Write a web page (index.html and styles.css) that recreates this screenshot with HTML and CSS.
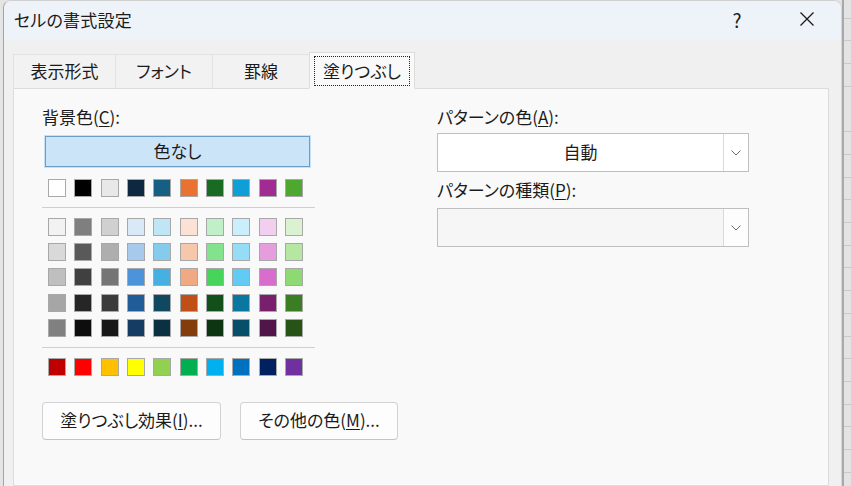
FILE: index.html
```html
<!DOCTYPE html>
<html lang="ja">
<head>
<meta charset="utf-8">
<link rel="stylesheet" href="styles.css">
</head>
<body>
<div class="screen">
  <div class="window">
    <div class="titlebar">
      <div class="title">セルの書式設定</div>
      <div class="help">?</div>
      <div class="close">
        <svg width="16" height="16" viewBox="0 0 16 16"><path d="M1.5 1.5 L14.5 14.5 M14.5 1.5 L1.5 14.5" stroke="#1a1a1a" stroke-width="1.3" fill="none"/></svg>
      </div>
    </div>
    <div class="content">
      <div class="tabs">
        <div class="tab t1">表示形式</div>
        <div class="tab t2">フォント</div>
        <div class="tab t3">罫線</div>
        <div class="tab active"><span class="focus">塗りつぶし</span></div>
      </div>
      <div class="panel">
        <div class="leftcol">
          <div class="label">背景色(<u>C</u>):</div>
          <div class="nocolor">色なし</div>
          <div class="row10 first">
            <span class="sw" style="background:#ffffff"></span>
            <span class="sw" style="background:#000000"></span>
            <span class="sw" style="background:#e8e8e8"></span>
            <span class="sw" style="background:#0e2841"></span>
            <span class="sw" style="background:#156082"></span>
            <span class="sw" style="background:#e97132"></span>
            <span class="sw" style="background:#196b24"></span>
            <span class="sw" style="background:#0f9ed5"></span>
            <span class="sw" style="background:#a02b93"></span>
            <span class="sw" style="background:#4ea72e"></span>
          </div>
          <div class="sep"></div>
          <div class="grid">
            <span class="sw" style="background:#f2f2f2"></span>
            <span class="sw" style="background:#7f7f7f"></span>
            <span class="sw" style="background:#d0d0d0"></span>
            <span class="sw" style="background:#dae9f8"></span>
            <span class="sw" style="background:#c0e6f5"></span>
            <span class="sw" style="background:#fbe2d5"></span>
            <span class="sw" style="background:#c1f0c8"></span>
            <span class="sw" style="background:#caeefb"></span>
            <span class="sw" style="background:#f2ceef"></span>
            <span class="sw" style="background:#daf2d0"></span>

            <span class="sw" style="background:#d9d9d9"></span>
            <span class="sw" style="background:#595959"></span>
            <span class="sw" style="background:#aeaeae"></span>
            <span class="sw" style="background:#a6c9ec"></span>
            <span class="sw" style="background:#83cceb"></span>
            <span class="sw" style="background:#f7c7ac"></span>
            <span class="sw" style="background:#83e28e"></span>
            <span class="sw" style="background:#95dcf7"></span>
            <span class="sw" style="background:#e59edd"></span>
            <span class="sw" style="background:#b5e6a2"></span>

            <span class="sw" style="background:#bfbfbf"></span>
            <span class="sw" style="background:#404040"></span>
            <span class="sw" style="background:#757575"></span>
            <span class="sw" style="background:#4d93d9"></span>
            <span class="sw" style="background:#45b0e1"></span>
            <span class="sw" style="background:#f1a983"></span>
            <span class="sw" style="background:#47d45a"></span>
            <span class="sw" style="background:#61cbf3"></span>
            <span class="sw" style="background:#d86dcd"></span>
            <span class="sw" style="background:#8ed973"></span>

            <span class="sw" style="background:#a6a6a6"></span>
            <span class="sw" style="background:#262626"></span>
            <span class="sw" style="background:#3a3a3a"></span>
            <span class="sw" style="background:#215c98"></span>
            <span class="sw" style="background:#104862"></span>
            <span class="sw" style="background:#c04f15"></span>
            <span class="sw" style="background:#124f1a"></span>
            <span class="sw" style="background:#0b76a0"></span>
            <span class="sw" style="background:#78206e"></span>
            <span class="sw" style="background:#3b7d23"></span>

            <span class="sw" style="background:#808080"></span>
            <span class="sw" style="background:#0d0d0d"></span>
            <span class="sw" style="background:#171717"></span>
            <span class="sw" style="background:#153d64"></span>
            <span class="sw" style="background:#0b3041"></span>
            <span class="sw" style="background:#843c0c"></span>
            <span class="sw" style="background:#0d3512"></span>
            <span class="sw" style="background:#074f69"></span>
            <span class="sw" style="background:#501549"></span>
            <span class="sw" style="background:#275317"></span>
          </div>
          <div class="sep"></div>
          <div class="row10 std">
            <span class="sw" style="background:#c00000"></span>
            <span class="sw" style="background:#ff0000"></span>
            <span class="sw" style="background:#ffc000"></span>
            <span class="sw" style="background:#ffff00"></span>
            <span class="sw" style="background:#92d050"></span>
            <span class="sw" style="background:#00b050"></span>
            <span class="sw" style="background:#00b0f0"></span>
            <span class="sw" style="background:#0070c0"></span>
            <span class="sw" style="background:#002060"></span>
            <span class="sw" style="background:#7030a0"></span>
          </div>
          <div class="buttons">
            <div class="btn b1">塗りつぶし効果(<u>I</u>)...</div>
            <div class="btn b2">その他の色(<u>M</u>)...</div>
          </div>
        </div>
        <div class="rightcol">
          <div class="label">パターンの色(<u>A</u>):</div>
          <div class="select">
            <div class="value">自動</div>
            <div class="drop"><svg width="10" height="6" viewBox="0 0 10 6"><path d="M0.5 0.5 L5 5 L9.5 0.5" stroke="#6a6a6a" stroke-width="1" fill="none"/></svg></div>
          </div>
          <div class="label l2">パターンの種類(<u>P</u>):</div>
          <div class="select disabled">
            <div class="value"></div>
            <div class="drop"><svg width="10" height="6" viewBox="0 0 10 6"><path d="M0.5 0.5 L5 5 L9.5 0.5" stroke="#6a6a6a" stroke-width="1" fill="none"/></svg></div>
          </div>
        </div>
      </div>
    </div>
  </div>
  <div class="sheet"></div>
</div>
</body>
</html>
```

FILE: styles.css
```css
* { box-sizing: border-box; }
html, body {
  margin: 0;
  padding: 0;
  width: 851px;
  height: 486px;
  overflow: hidden;
}
body {
  background: #e4e4e4;
  font-family: "Noto Sans CJK JP", "Noto Sans", sans-serif;
  font-feature-settings: "palt";
  color: #1b1b1b;
}
u { text-underline-offset: 2px; text-decoration-thickness: 1px; }

.screen {
  display: flex;
  height: 486px;
}
.window {
  width: 839px;
  flex-shrink: 0;
  margin-left: 3px;
  height: 486px;
  border-left: 1px solid #a3a3a3;
  border-right: 1px solid #d6d6d6;
  border-top: 1px solid #d0d0d0;
  border-radius: 8px 8px 0 0;
  overflow: hidden;
  background: #f0f0f0;
  display: flex;
  flex-direction: column;
}
.sheet {
  flex: 1;
  border-left: 2px solid #a9a9a9;
  background-color: #e3e3e3;
  background-image: repeating-linear-gradient(to bottom, transparent 0, transparent 21.7px, #c9c9c9 21.7px, #c9c9c9 22.7px);
  background-position: 0 -4px;
}

.titlebar {
  height: 39px;
  background: #eef2f9;
  display: flex;
  align-items: center;
  padding-left: 10px;
}
.title {
  font-size: 17px;
  flex: 1;
  letter-spacing: 0.2px;
  padding-bottom: 3px;
}
.help {
  font-size: 19px;
  width: 20px;
  text-align: center;
  margin-right: 52px;
  padding-bottom: 3px;
}
.close {
  width: 16px;
  height: 16px;
  margin-right: 26px;
  margin-bottom: 4px;
  display: flex;
}

.content {
  flex: 1;
  padding: 13px 12px 0 9px;
  display: flex;
  flex-direction: column;
}
.tabs {
  display: flex;
  align-items: flex-end;
  height: 36px;
  margin-bottom: -1px;
  position: relative;
  z-index: 1;
}
.tab {
  height: 35px;
  border-top: 1px solid #e2e2e2;
  border-left: 1px solid #e2e2e2;
  background: #f2f2f2;
  font-size: 17px;
  display: flex;
  align-items: center;
  justify-content: center;
  padding-bottom: 2px;
  border-bottom: 1px solid #dcdcdc;
  flex-shrink: 0;
}
.t1 { width: 102px; }
.t2 { width: 97px; }
.t3 { width: 97px; }
.tab.active {
  width: 106px;
  height: 37px;
  background: #f9f9f9;
  border: 1px solid #dcdcdc;
  border-bottom: 1px solid #f9f9f9;
  padding: 3px 4px 2px 4px;
}
.focus {
  width: 100%;
  height: 100%;
  border: 1px dotted #222;
  display: flex;
  align-items: center;
  justify-content: center;
  padding-bottom: 1px;
}

.panel {
  flex: 1;
  background: #f9f9f9;
  border: 1px solid #dcdcdc;
  display: flex;
  padding: 18px 0 0 28px;
}
.leftcol {
  width: 273px;
  flex-shrink: 0;
  display: flex;
  flex-direction: column;
}
.label {
  font-size: 17px;
  line-height: 20px;
  height: 20px;
  white-space: nowrap;
}
.nocolor {
  margin: 9px 0 0 3px;
  width: 265px;
  height: 31px;
  background: #cce4f7;
  border: 1px solid #6c9cc8;
  box-shadow: 0 0 0 1px #c5e1f8;
  font-size: 17px;
  display: flex;
  align-items: center;
  justify-content: center;
  padding-bottom: 2px;
}
.row10, .grid {
  display: grid;
  grid-template-columns: repeat(10, 18px);
  column-gap: 8.33px;
  padding-left: 6px;
}
.row10.first { margin-top: 12px; }
.grid {
  margin-top: 10px;
  row-gap: 7.2px;
}
.row10.std { margin-top: 10px; }
.sw {
  width: 18px;
  height: 18px;
  border: 1px solid #a8a8a8;
  display: block;
}
.sep {
  height: 1px;
  background: #cfcfcf;
  margin-top: 10px;
}
.buttons {
  display: flex;
  gap: 19px;
  margin-top: 26px;
  width: 400px;
}
.btn {
  flex-shrink: 0;
  height: 38px;
  background: #fdfdfd;
  border: 1px solid #d2d2d2;
  border-bottom-color: #c4c4c4;
  border-radius: 4px;
  font-size: 17px;
  display: flex;
  align-items: center;
  justify-content: center;
  white-space: nowrap;
  padding-bottom: 2px;
}
.b1 { width: 179px; }
.b2 { width: 158px; }

.rightcol {
  margin-left: 122px;
  width: 312px;
  flex-shrink: 0;
  display: flex;
  flex-direction: column;
}
.select {
  margin-top: 6px;
  height: 39px;
  border: 1px solid #bfbfbf;
  background: #ffffff;
  display: flex;
}
.select .value {
  flex: 1;
  font-size: 17px;
  display: flex;
  align-items: center;
  justify-content: center;
  padding-bottom: 2px;
}
.select .drop {
  width: 25px;
  border-left: 1px solid #dadada;
  background: #ffffff;
  display: flex;
  align-items: center;
  justify-content: center;
}
.select.disabled { background: #f6f6f6; margin-top: 8px; }
.select.disabled .drop { background: #fdfdfd; }
.label.l2 { margin-top: 8px; }
```
